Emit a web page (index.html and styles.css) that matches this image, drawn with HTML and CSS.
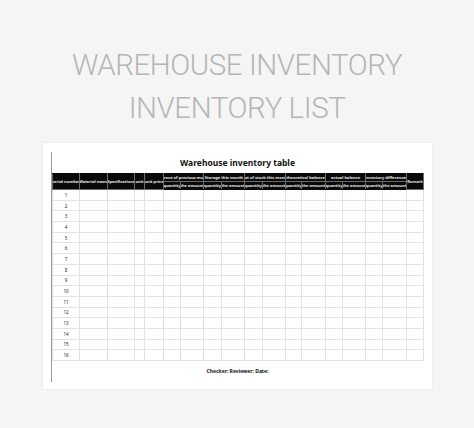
FILE: index.html
```html
<!DOCTYPE html>
<html>
<head>
<meta charset="utf-8">
<link rel="stylesheet" href="styles.css">
</head>
<body>
<div class="hero">
  <div class="hero-line">WAREHOUSE INVENTORY</div>
  <div class="hero-line">INVENTORY LIST</div>
</div>
<div class="card">
  <div class="sheet">
    <div class="sheet-title">Warehouse inventory table</div>
    <table class="grid">
      <colgroup>
        <col style="width:27px"><col style="width:28px"><col style="width:27px"><col style="width:10px"><col style="width:19px">
        <col style="width:17px"><col style="width:23px"><col style="width:18px"><col style="width:23px"><col style="width:18px">
        <col style="width:23px"><col style="width:16px"><col style="width:24px"><col style="width:17px"><col style="width:23px">
        <col style="width:17px"><col style="width:24px"><col style="width:17px">
      </colgroup>
      <thead>
        <tr class="h1">
          <th rowspan="2"><span>serial number</span></th>
          <th rowspan="2"><span>Material name</span></th>
          <th rowspan="2"><span>Specifications</span></th>
          <th rowspan="2"><span>unit</span></th>
          <th rowspan="2"><span>unit price</span></th>
          <th colspan="2"><span>Balance of previous month</span></th>
          <th colspan="2"><span>Storage this month</span></th>
          <th colspan="2"><span>Out of stock this month</span></th>
          <th colspan="2"><span>theoretical balance</span></th>
          <th colspan="2"><span>actual balance</span></th>
          <th colspan="2"><span>Inventory differences</span></th>
          <th rowspan="2"><span>Remark</span></th>
        </tr>
        <tr class="h2">
          <th><span>quantity</span></th><th><span>the amount</span></th>
          <th><span>quantity</span></th><th><span>the amount</span></th>
          <th><span>quantity</span></th><th><span>the amount</span></th>
          <th><span>quantity</span></th><th><span>the amount</span></th>
          <th><span>quantity</span></th><th><span>the amount</span></th>
          <th><span>quantity</span></th><th><span>the amount</span></th>
        </tr>
      </thead>
      <tbody>
        <tr><td>1</td><td></td><td></td><td></td><td></td><td></td><td></td><td></td><td></td><td></td><td></td><td></td><td></td><td></td><td></td><td></td><td></td><td></td></tr>
        <tr><td>2</td><td></td><td></td><td></td><td></td><td></td><td></td><td></td><td></td><td></td><td></td><td></td><td></td><td></td><td></td><td></td><td></td><td></td></tr>
        <tr><td>3</td><td></td><td></td><td></td><td></td><td></td><td></td><td></td><td></td><td></td><td></td><td></td><td></td><td></td><td></td><td></td><td></td><td></td></tr>
        <tr><td>4</td><td></td><td></td><td></td><td></td><td></td><td></td><td></td><td></td><td></td><td></td><td></td><td></td><td></td><td></td><td></td><td></td><td></td></tr>
        <tr><td>5</td><td></td><td></td><td></td><td></td><td></td><td></td><td></td><td></td><td></td><td></td><td></td><td></td><td></td><td></td><td></td><td></td><td></td></tr>
        <tr><td>6</td><td></td><td></td><td></td><td></td><td></td><td></td><td></td><td></td><td></td><td></td><td></td><td></td><td></td><td></td><td></td><td></td><td></td></tr>
        <tr><td>7</td><td></td><td></td><td></td><td></td><td></td><td></td><td></td><td></td><td></td><td></td><td></td><td></td><td></td><td></td><td></td><td></td><td></td></tr>
        <tr><td>8</td><td></td><td></td><td></td><td></td><td></td><td></td><td></td><td></td><td></td><td></td><td></td><td></td><td></td><td></td><td></td><td></td><td></td></tr>
        <tr><td>9</td><td></td><td></td><td></td><td></td><td></td><td></td><td></td><td></td><td></td><td></td><td></td><td></td><td></td><td></td><td></td><td></td><td></td></tr>
        <tr><td>10</td><td></td><td></td><td></td><td></td><td></td><td></td><td></td><td></td><td></td><td></td><td></td><td></td><td></td><td></td><td></td><td></td><td></td></tr>
        <tr><td>11</td><td></td><td></td><td></td><td></td><td></td><td></td><td></td><td></td><td></td><td></td><td></td><td></td><td></td><td></td><td></td><td></td><td></td></tr>
        <tr><td>12</td><td></td><td></td><td></td><td></td><td></td><td></td><td></td><td></td><td></td><td></td><td></td><td></td><td></td><td></td><td></td><td></td><td></td></tr>
        <tr><td>13</td><td></td><td></td><td></td><td></td><td></td><td></td><td></td><td></td><td></td><td></td><td></td><td></td><td></td><td></td><td></td><td></td><td></td></tr>
        <tr><td>14</td><td></td><td></td><td></td><td></td><td></td><td></td><td></td><td></td><td></td><td></td><td></td><td></td><td></td><td></td><td></td><td></td><td></td></tr>
        <tr><td>15</td><td></td><td></td><td></td><td></td><td></td><td></td><td></td><td></td><td></td><td></td><td></td><td></td><td></td><td></td><td></td><td></td><td></td></tr>
        <tr><td>16</td><td></td><td></td><td></td><td></td><td></td><td></td><td></td><td></td><td></td><td></td><td></td><td></td><td></td><td></td><td></td><td></td><td></td></tr>
      </tbody>
    </table>
    <div class="sheet-footer">Checker: Reviewer: Date:</div>
  </div>
</div>
</body>
</html>
```
FILE: styles.css
```css
html, body {
  margin: 0;
  padding: 0;
}
body {
  width: 474px;
  height: 428px;
  background: #f5f5f5;
  font-family: "Noto Sans", "Open Sans", sans-serif;
  overflow: hidden;
}
.hero {
  padding-top: 44px;
  height: 99px;
  box-sizing: border-box;
  text-align: center;
}
.hero-line {
  font-family: "Roboto", "Noto Sans", sans-serif;
  font-weight: 300;
  font-size: 29.5px;
  letter-spacing: -0.45px;
  line-height: 43px;
  color: #b5b5b5;
  white-space: nowrap;
}
.card {
  margin-left: 43px;
  width: 389px;
  height: 246px;
  background: #ffffff;
  box-shadow: 0 0 2px rgba(0,0,0,0.08);
  padding-top: 9px;
  box-sizing: border-box;
  position: relative;
  top: 44px;
}
.sheet {
  margin-left: 8px;
  width: 372px;
  height: 230px;
  border-left: 1px solid #9a9a9a;
  box-sizing: border-box;
}
.sheet-title {
  height: 21px;
  line-height: 22px;
  text-align: center;
  font-weight: 700;
  font-size: 8.5px;
  color: #111;
}
.grid {
  border-collapse: collapse;
  table-layout: fixed;
  width: 371px;
}
.grid th {
  background: #0a0a0a;
  color: #e6e6e6;
  font-weight: 700;
  font-size: 4px;
  line-height: 4px;
  padding: 0;
  overflow: hidden;
  border: 0.5px solid #6a6a6a;
  border-top-color: #0a0a0a;
}
.grid th span {
  display: flex;
  justify-content: center;
  white-space: nowrap;
}
.grid .h1 th { height: 7px; }
.grid .h2 th { height: 7px; border-bottom-color: #0a0a0a; }
.grid td {
  height: 9.7px;
  line-height: 4px;
  padding: 0;
  border: 1px solid #e2e2e2;
  font-size: 4.5px;
  color: #222;
  text-align: center;
  overflow: hidden;
}
.sheet-footer {
  margin-top: 7px;
  text-align: center;
  font-weight: 700;
  font-size: 5px;
  line-height: 6px;
  color: #111;
}
```
